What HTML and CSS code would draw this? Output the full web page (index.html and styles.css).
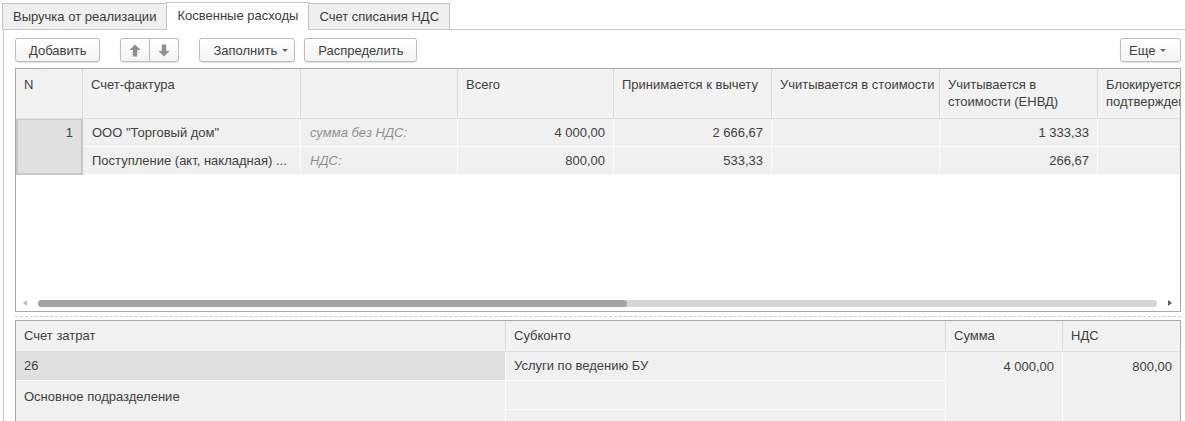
FILE: index.html
```html
<!DOCTYPE html>
<html lang="ru">
<head>
<meta charset="utf-8">
<title>Косвенные расходы</title>
<link rel="stylesheet" href="styles.css">
</head>
<body>
<div class="page">
  <div class="tabs">
    <div class="tab">Выручка от реализации</div>
    <div class="tab active">Косвенные расходы</div>
    <div class="tab">Счет списания НДС</div>
  </div>
  <div class="panel">
    <div class="toolbar">
      <button class="btn">Добавить</button>
      <div class="btn-group">
        <button class="btn icon-btn"><svg width="12" height="13" viewBox="0 0 12 13"><path d="M6 0.5 L11.5 6 L8.2 6 L8.2 12.5 L3.8 12.5 L3.8 6 L0.5 6 Z" fill="#8e8e8e"/></svg></button>
        <button class="btn icon-btn"><svg width="12" height="13" viewBox="0 0 12 13"><path d="M6 12.5 L11.5 7 L8.2 7 L8.2 0.5 L3.8 0.5 L3.8 7 L0.5 7 Z" fill="#8e8e8e"/></svg></button>
      </div>
      <button class="btn drop">Заполнить<span class="caret"></span></button>
      <button class="btn">Распределить</button>
      <div class="spacer"></div>
      <button class="btn drop more">Еще<span class="caret"></span></button>
    </div>

    <div class="grid1">
      <div class="g1-cols g1-head">
        <div class="hc">N</div>
        <div class="hc">Счет-фактура</div>
        <div class="hc"></div>
        <div class="hc">Всего</div>
        <div class="hc">Принимается к вычету</div>
        <div class="hc">Учитывается в стоимости</div>
        <div class="hc">Учитывается в стоимости (ЕНВД)</div>
        <div class="hc">Блокируется до подтверждения 0%</div>
      </div>
      <div class="g1-cols g1-body">
        <div class="bc num-cell">1</div>
        <div class="bc">ООО "Торговый дом"</div>
        <div class="bc hint">сумма без НДС:</div>
        <div class="bc r">4 000,00</div>
        <div class="bc r">2 666,67</div>
        <div class="bc"></div>
        <div class="bc r">1 333,33</div>
        <div class="bc"></div>
        <div class="bc">Поступление (акт, накладная) ...</div>
        <div class="bc hint">НДС:</div>
        <div class="bc r">800,00</div>
        <div class="bc r">533,33</div>
        <div class="bc"></div>
        <div class="bc r">266,67</div>
        <div class="bc"></div>
      </div>
      <div class="g1-empty"></div>
      <div class="hscroll">
        <span class="arr arr-left"></span>
        <div class="track"><div class="thumb"></div></div>
        <span class="arr arr-right"></span>
      </div>
    </div>

    <div class="splitter"></div>

    <div class="grid2">
      <div class="g2-cols g2-head">
        <div class="hc2">Счет затрат</div>
        <div class="hc2">Субконто</div>
        <div class="hc2">Сумма</div>
        <div class="hc2">НДС</div>
      </div>
      <div class="g2-cols g2-body">
        <div class="c2 acc">26</div>
        <div class="c2 sub1">Услуги по ведению БУ</div>
        <div class="c2 r sum">4 000,00</div>
        <div class="c2 r vat">800,00</div>
        <div class="c2 dept">Основное подразделение</div>
        <div class="c2 sub2"></div>
        <div class="c2 sub3"></div>
      </div>
    </div>
  </div>
</div>
</body>
</html>
```

FILE: styles.css
```css
* { box-sizing: border-box; }

html, body {
  margin: 0;
  padding: 0;
  background: #ffffff;
}

body {
  width: 1185px;
  height: 421px;
  overflow: hidden;
  font-family: "Liberation Sans", Arial, sans-serif;
  font-size: 13px;
  line-height: 16px;
  color: #404040;
}

.page {
  padding-left: 2px;
}

/* Tabs */
.tabs {
  display: flex;
  align-items: flex-end;
  height: 30px;
  border-bottom: 1px solid #c4c4c4;
}

.tab {
  height: 26px;
  padding: 0 10px;
  display: flex;
  align-items: center;
  background: #efefef;
  border: 1px solid #c4c4c4;
  border-bottom: none;
  margin-right: -1px;
  white-space: nowrap;
  color: #3c3c3c;
}

.tab.active {
  height: 28px;
  margin-bottom: -1px;
  background: #ffffff;
  position: relative;
  z-index: 1;
  padding-bottom: 1px;
}

/* Panel */
.panel {
  margin-left: 1px;
  border-left: 1px solid #c4c4c4;
  padding: 8px 4px 0 11px;
  height: 391px;
}

.toolbar {
  display: flex;
  align-items: center;
  height: 24px;
}

.btn {
  height: 24px;
  padding: 0 13px;
  font-family: inherit;
  font-size: 13px;
  color: #404040;
  background: linear-gradient(#ffffff, #f3f3f3);
  border: 1px solid #bdbdbd;
  border-radius: 3px;
  box-shadow: 0 1px 1px rgba(0, 0, 0, 0.12);
  display: flex;
  align-items: center;
  white-space: nowrap;
  margin-right: 9px;
}

.btn-group {
  display: flex;
  margin-left: 11px;
  margin-right: 20px;
}

.btn-group .icon-btn {
  width: 30px;
  padding: 0;
  justify-content: center;
  margin: 0;
  border-radius: 0;
}

.btn-group .icon-btn:first-child {
  border-radius: 3px 0 0 3px;
}

.btn-group .icon-btn:last-child {
  border-radius: 0 3px 3px 0;
  border-left: none;
  width: 29px;
}

.btn.drop {
  padding: 0 6px 0 13px;
}

.caret {
  display: inline-block;
  width: 0;
  height: 0;
  margin-left: 5px;
  border-left: 3px solid transparent;
  border-right: 3px solid transparent;
  border-top: 3px solid #666;
}

.spacer {
  flex: 1;
}

.btn.more {
  padding: 0 6px 0 8px;
  width: 61px;
  margin-right: 0;
}

/* Grid 1 */
.grid1 {
  margin-top: 6px;
  width: 1166px;
  height: 244px;
  border: 1px solid #a8a8a8;
  display: flex;
  flex-direction: column;
  overflow: hidden;
}

.g1-cols {
  display: grid;
  grid-template-columns: 67px 218px 157px 156px 158px 168px 158px 160px;
}

.g1-head {
  height: 50px;
  background: #f2f2f2;
  border-bottom: 1px solid #dedede;
}

.hc {
  padding: 7px 0 0 8px;
  line-height: 17px;
  border-right: 1px solid #dadada;
  white-space: normal;
  overflow: hidden;
}

.g1-head .hc:nth-child(7) {
  padding-right: 30px;
}

.g1-body {
  grid-template-rows: 28px 28px;
  background: #f0f0f0;
}

.bc {
  height: 28px;
  padding: 0 8px 0 9px;
  display: flex;
  align-items: center;
  border-right: 1px solid #fbfbfb;
  border-bottom: 1px solid #fbfbfb;
  white-space: nowrap;
  overflow: hidden;
}

.bc.r {
  justify-content: flex-end;
}

.bc.hint {
  font-style: italic;
  color: #909090;
}

.num-cell {
  grid-row: span 2;
  height: 56px;
  align-items: flex-start;
  justify-content: flex-end;
  padding-top: 5px;
  background: #e0e0e0;
  border: 2px solid #c8c8c8;
  border-top-width: 1px;
}

.g1-empty {
  flex: 1;
}

.hscroll {
  height: 14px;
  display: flex;
  align-items: center;
  padding: 0 8px 2px 7px;
}

.arr {
  width: 0;
  height: 0;
  border-top: 3px solid transparent;
  border-bottom: 3px solid transparent;
}

.arr-left {
  border-right: 4px solid #bdbdbd;
}

.arr-right {
  border-left: 4px solid #5e5e5e;
}

.track {
  flex: 1;
  height: 7px;
  margin: 0 11px 0 11px;
  background: #d6d6d6;
  border-radius: 4px;
}

.thumb {
  width: 589px;
  height: 7px;
  background: #a3a3a3;
  border-radius: 4px;
}

.splitter {
  margin: 4px 0 3px;
  width: 1166px;
  border-top: 1px dashed #cdcdcd;
}

/* Grid 2 */
.grid2 {
  width: 1166px;
  border: 1px solid #a8a8a8;
  border-bottom: none;
  height: 110px;
  overflow: hidden;
}

.g2-cols {
  display: grid;
  grid-template-columns: 490px 440px 117px 117px;
}

.g2-head {
  height: 31px;
  background: #f2f2f2;
  border-bottom: 1px solid #dedede;
}

.hc2 {
  padding: 0 8px 0 8px;
  display: flex;
  align-items: center;
  border-right: 1px solid #dadada;
}

.hc2:last-child {
  border-right: none;
}

.g2-body {
  grid-template-rows: 29px 29px 29px;
  background: #f0f0f0;
}

.c2 {
  padding: 0 8px;
  display: flex;
  align-items: center;
  border-right: 1px solid #fbfbfb;
  border-bottom: 1px solid #fbfbfb;
  white-space: nowrap;
}

.c2.r {
  justify-content: flex-end;
  align-items: flex-start;
  padding-top: 7px;
}

.acc {
  grid-column: 1;
  grid-row: 1;
  background: #e0e0e0;
}

.dept {
  grid-column: 1;
  grid-row: 2 / span 2;
  align-items: flex-start;
  padding-top: 8px;
  border-bottom: none;
}

.sub1 { grid-column: 2; grid-row: 1; }
.sub2 { grid-column: 2; grid-row: 2; }
.sub3 { grid-column: 2; grid-row: 3; }

.sum {
  grid-column: 3;
  grid-row: 1 / span 3;
}

.vat {
  grid-column: 4;
  grid-row: 1 / span 3;
  border-right: none;
}
```
